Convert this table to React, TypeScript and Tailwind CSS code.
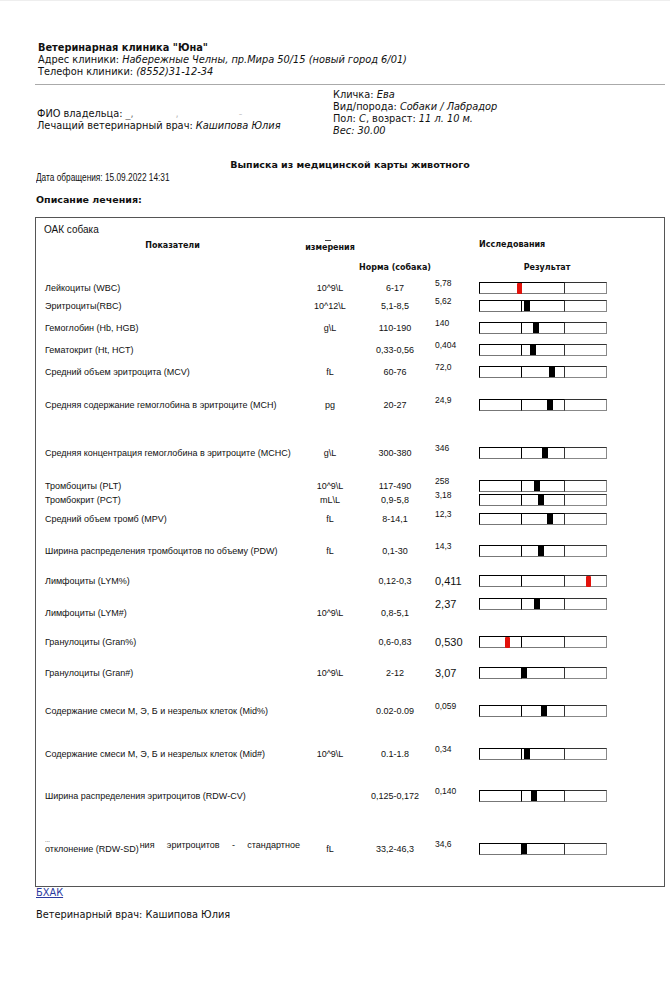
import React from "react";

type Row = {
  label: React.ReactNode;
  unit: string;
  norm: string;
  value: string;
  big?: boolean;
  pos: number;
  red?: boolean;
  gap: string;
  shift?: string;
};

const rows: Row[] = [
  { label: "Лейкоциты (WBC)", unit: "10^9\\L", norm: "6-17", value: "5,78", pos: 38, red: true, gap: "mt-[8px]" },
  { label: "Эритроциты(RBC)", unit: "10^12\\L", norm: "5,1-8,5", value: "5,62", pos: 45, gap: "mt-[4px]" },
  { label: "Гемоглобин (Hb, HGB)", unit: "g\\L", norm: "110-190", value: "140", pos: 54, gap: "mt-[8px]" },
  { label: "Гематокрит (Ht, HCT)", unit: "", norm: "0,33-0,56", value: "0,404", pos: 51, gap: "mt-[8px]" },
  { label: "Средний объем эритроцита (MCV)", unit: "fL", norm: "60-76", value: "72,0", pos: 70, gap: "mt-[8px]" },
  { label: "Средняя содержание гемоглобина в эритроците (MCH)", unit: "pg", norm: "20-27", value: "24,9", pos: 68, gap: "mt-[19px]" },
  { label: "Средняя концентрация гемоглобина в эритроците (MCHC)", unit: "g\\L", norm: "300-380", value: "346", pos: 63, gap: "mt-[34px]" },
  { label: "Тромбоциты (PLT)", unit: "10^9\\L", norm: "117-490", value: "258", pos: 55, gap: "mt-[19px]" },
  { label: "Тромбокрит (PCT)", unit: "mL\\L", norm: "0,9-5,8", value: "3,18", pos: 59, gap: "mt-[0px]" },
  { label: "Средний объем тромб (MPV)", unit: "fL", norm: "8-14,1", value: "12,3", pos: 68, gap: "mt-[5px]" },
  { label: "Ширина распределения тромбоцитов по объему (PDW)", unit: "fL", norm: "0,1-30", value: "14,3", pos: 59, gap: "mt-[18px]" },
  { label: "Лимфоциты (LYM%)", unit: "", norm: "0,12-0,3", value: "0,411", big: true, pos: 107, red: true, gap: "mt-[16px]" },
  { label: "Лимфоциты (LYM#)", unit: "10^9\\L", norm: "0,8-5,1", value: "2,37", big: true, pos: 55, gap: "mt-[18px]", shift: "mb-[18px]" },
  { label: "Гранулоциты (Gran%)", unit: "", norm: "0,6-0,83", value: "0,530", big: true, pos: 26, red: true, gap: "mt-[15px]" },
  { label: "Гранулоциты (Gran#)", unit: "10^9\\L", norm: "2-12", value: "3,07", big: true, pos: 42, gap: "mt-[17px]" },
  { label: "Содержание смеси М, Э, Б и незрелых клеток (Mid%)", unit: "", norm: "0.02-0.09", value: "0,059", pos: 62, gap: "mt-[24px]" },
  { label: "Содержание смеси М, Э, Б и незрелых клеток (Mid#)", unit: "10^9\\L", norm: "0.1-1.8", value: "0,34", pos: 45, gap: "mt-[29px]" },
  { label: "Ширина распределения эритроцитов (RDW-CV)", unit: "", norm: "0,125-0,172", value: "0,140", pos: 52, gap: "mt-[28px]" },
  {
    label: (
      <div className="flex w-full items-start">
        <span className="relative">
          отклонение (RDW-SD)
          <span className="absolute left-0 top-[-6px] text-[6px] leading-none">...</span>
        </span>
        <span className="-mt-[4px] flex flex-1 justify-between pl-[1px]">
          <span>ния</span>
          <span>эритроцитов</span>
          <span>-</span>
          <span>стандартное</span>
        </span>
      </div>
    ),
    unit: "fL",
    norm: "33,2-46,3",
    value: "34,6",
    pos: 42,
    gap: "mt-[39px]",
  },
];

function Bar({ pos, red }: { pos: number; red?: boolean }) {
  return (
    <div className="relative flex h-[12px] w-[128px]">
      <div className="w-[43px] border-t border-b border-l border-r border-t-black border-l-black border-r-black border-b-[#777]" />
      <div className="w-[43px] border-t border-b border-r border-t-black border-r-[#333] border-b-[#777]" />
      <div className="w-[42px] border-t border-b border-r border-[#888] border-t-[#333]" />
      <div
        className={
          red
            ? "absolute top-[1px] h-[11px] w-[5px] rounded-[1px] bg-[#e3120b]"
            : "absolute top-[1px] h-[10px] w-[6px] bg-black"
        }
        style={{ left: pos }}
      />
    </div>
  );
}

export default function App() {
  return (
    <div className="min-h-screen w-[670px] border-t border-[#eee] bg-white text-[#111]">
      <div className="pl-[38px] pt-[41px] font-['DejaVu_Sans',sans-serif] text-[9.8px] leading-[12px]">
        <div className="font-bold">Ветеринарная клиника "Юна"</div>
        <div>
          Адрес клиники: <i>Набережные Челны, пр.Мира 50/15 (новый город 6/01)</i>
        </div>
        <div>
          Телефон клиники: <i>(8552)31-12-34</i>
        </div>
      </div>
      <div className="ml-[35px] mr-[5px] mt-[6px] border-t border-[#aaa]" />

      <div className="mt-[4px] flex font-['DejaVu_Sans',sans-serif] text-[9.8px] leading-[12px]">
        <div className="w-[333px] pl-[37px] pt-[19px]">
          <div>
            ФИО владельца: <span className="text-[#777]">_,</span>
            <span className="ml-[42px] text-[#bbb]">‚</span>
            <span className="ml-[60px] text-[#ccc]">-</span>
          </div>
          <div>
            Лечащий ветеринарный врач: <i>Кашипова Юлия</i>
          </div>
        </div>
        <div>
          <div>
            Кличка: <i>Ева</i>
          </div>
          <div>
            Вид/порода: <i>Собаки / Лабрадор</i>
          </div>
          <div>
            Пол: <i>С</i>, возраст: <i>11 л. 10 м.</i>
          </div>
          <div>
            <i>Вес: 30.00</i>
          </div>
        </div>
      </div>

      <div className="ml-[35px] mt-[22px] w-[630px] text-center font-['DejaVu_Sans',sans-serif] text-[9.5px] font-bold leading-[12px]">
        Выписка из медицинской карты животного
      </div>
      <div className="ml-[36px] mt-[1px] font-['Liberation_Sans',Arial,sans-serif] text-[10px] leading-[12px]">
        <span className="inline-block origin-left scale-x-[0.83] whitespace-nowrap">Дата обращения: 15.09.2022 14:31</span>
      </div>
      <div className="ml-[36px] mt-[10px] font-['DejaVu_Sans',sans-serif] text-[9.5px] font-bold leading-[12px]">
        Описание лечения:
      </div>

      <div className="ml-[35px] mt-[11px] w-[630px] border border-[#555] pb-[30px] pl-[9px] pt-[6px] font-['Liberation_Sans',Arial,sans-serif] text-[9px] leading-[12px]">
        <div className="-ml-[1px] text-[10px]">ОАК собака</div>

        <div className="mt-[4px] flex items-end font-['DejaVu_Sans',sans-serif] text-[8px] font-bold leading-[10px]">
          <div className="w-[255px] pb-[2px] text-center">Показатели</div>
          <div className="flex w-[60px] flex-col items-center">
            <div className="mb-[2px] ml-[-4px] h-[1px] w-[6px] bg-[#444]" />
            <div>измерения</div>
          </div>
          <div className="w-[119px]" />
          <div className="pb-[3px]">Исследования</div>
        </div>

        <div className="mt-[10px] flex font-['DejaVu_Sans',sans-serif] text-[8px] font-bold leading-[10px]">
          <div className="w-[305px]" />
          <div className="w-[90px] whitespace-nowrap text-center">Норма (собака)</div>
          <div className="w-[39px]" />
          <div className="w-[128px] pl-[8px] text-center">Результат</div>
        </div>

        {rows.map((r, i) => (
          <div key={i} className={"flex h-[14px] items-center " + r.gap}>
            <div className="flex w-[255px] items-center">{r.label}</div>
            <div className="w-[60px] text-center">{r.unit}</div>
            <div className="w-[70px] text-center">{r.norm}</div>
            <div className={"flex items-center " + (r.shift ?? "")}>
              <div className="w-[49px] pl-[5px]">
                {r.big ? (
                  <span className="text-[11px]">{r.value}</span>
                ) : (
                  <span className="relative -top-[5px] text-[8.5px]">{r.value}</span>
                )}
              </div>
              <Bar pos={r.pos} red={r.red} />
            </div>
          </div>
        ))}
      </div>

      <div className="ml-[36px] font-['DejaVu_Sans',sans-serif] text-[9.8px] leading-[12px]">
        <a className="text-[#2b3a9f] underline">БХАК</a>
        <div className="mt-[10px]">Ветеринарный врач: Кашипова Юлия</div>
      </div>
    </div>
  );
}
